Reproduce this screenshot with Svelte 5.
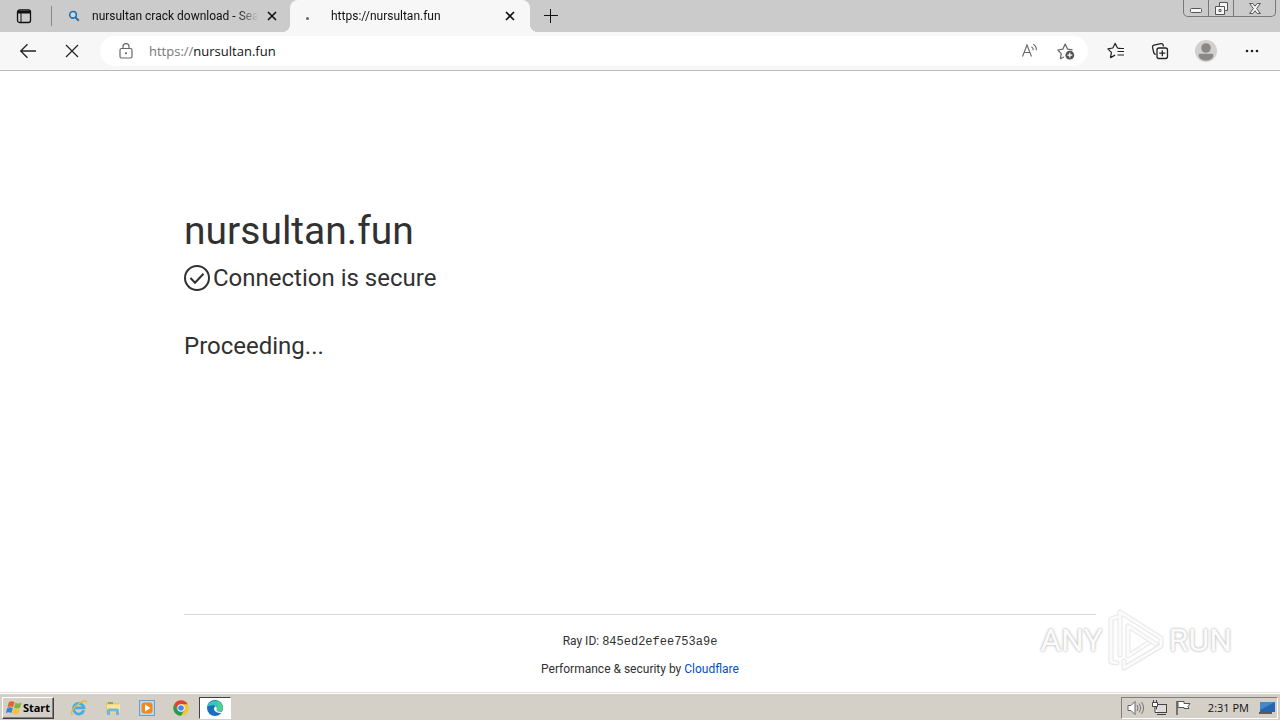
<script>
  const tabs = [
    { title: 'nursultan crack download - Sea', active: false },
    { title: 'https://nursultan.fun', active: true }
  ];
</script>

<div class="desktop">
  <header class="tabstrip">
    <button class="workspace" aria-label="Tab actions">
      <svg width="16" height="16" viewBox="0 0 16 16"><rect x="1.5" y="2" width="13" height="12.5" rx="2" fill="none" stroke="#111" stroke-width="1.3" /><path d="M2 3h12v2.5H2z" fill="#111" /><path d="M5 5v9" stroke="#111" /></svg>
    </button>
    <span class="divider"></span>
    {#each tabs as tab}
      <div class="tab" class:active={tab.active}>
        <span class="favicon">
          {#if tab.active}
            <i class="dot"></i>
          {:else}
            <svg width="12" height="12" viewBox="0 0 12 12"><circle cx="5" cy="4.8" r="3.3" fill="#c2dcef" stroke="#286fa8" stroke-width="1.6" /><path d="M7.4 7.4l3.4 3.4" stroke="#286fa8" stroke-width="2" /></svg>
          {/if}
        </span>
        <span class="title">{tab.title}</span>
        <button class="close" aria-label="Close tab">
          <svg width="10" height="10" viewBox="0 0 10 10"><path d="M1 1l8 8M9 1L1 9" stroke="#111" stroke-width="1.6" /></svg>
        </button>
      </div>
    {/each}
    <button class="newtab" aria-label="New tab">
      <svg width="14" height="14" viewBox="0 0 14 14"><path d="M0 6.500h14M6.500 0v14" stroke="#111" stroke-width="1" /></svg>
    </button>
    <div class="window-controls">
      <button aria-label="Minimize"><svg width="12" height="5" viewBox="0 0 12 5"><rect x=".5" y=".5" width="11" height="4" rx="1" fill="#f5f5f5" stroke="#555" /></svg></button>
      <button aria-label="Restore"><svg width="13" height="13" viewBox="0 0 13 13"><path d="M4.500.5h8v8h-3v4h-9v-8h4z" fill="#f5f5f5" stroke="#555" /><path d="M4.500 4.500h5v4M4 7.500h2v2H4z" fill="none" stroke="#555" /></svg></button>
      <button class="wide" aria-label="Close"><svg width="12" height="11" viewBox="0 0 12 11"><path d="M.6.5h3.200L6 3.200 8.200.5h3.200L7.700 5.500l3.700 5H8.200L6 7.800l-2.200 2.700H.6l3.700-5z" fill="#f5f5f5" stroke="#555" /></svg></button>
    </div>
  </header>

  <nav class="toolbar">
    <button aria-label="Back"><svg width="18" height="16" viewBox="0 0 18 16"><path d="M17 8H2M8.500 1.200L1.700 8l6.800 6.800" fill="none" stroke="#222" stroke-width="1.3" /></svg></button>
    <button aria-label="Stop loading"><svg width="14" height="14" viewBox="0 0 14 14"><path d="M1 1l12 12M13 1L1 13" stroke="#222" stroke-width="1.2" /></svg></button>
    <div class="address">
      <svg width="14" height="16" viewBox="0 0 14 16"><rect x="1" y="5.500" width="12" height="9.500" rx="1.500" fill="none" stroke="#666" stroke-width="1.200" /><path d="M4 5.500V3.600a3 3 0 0 1 6 0v1.900" fill="none" stroke="#666" stroke-width="1.200" /><circle cx="7" cy="10.300" r="1" fill="#555" /></svg>
      <a class="url" href="https://nursultan.fun"><span>https://</span>nursultan.fun</a>
      <button aria-label="Read aloud"><svg width="18" height="16" viewBox="0 0 18 16"><path d="M1.500 13.500L6 2l4.500 11.500M3 9.500h6M10.500 3.800c1.300.8 1.800 2 1.800 3.500M12.300 1.200c2.200 1.300 3.200 3.400 3 6" fill="none" stroke="#666" stroke-width="1.100" /></svg></button>
      <button aria-label="Add to favorites"><svg width="18" height="18" viewBox="0 0 18 18"><path d="M7 15l-3.600 1.800.8-5.200L.9 8l4.900-.8L8.200 2l2.400 5.200 5 .6" fill="none" stroke="#666" stroke-width="1.200" stroke-linejoin="round" /><circle cx="12.800" cy="13.200" r="4.400" fill="#555" /><path d="M12.800 10.800v4.800M10.400 13.200h4.800" stroke="#fff" stroke-width="1.200" /></svg></button>
    </div>
    <button aria-label="Favorites"><svg width="18" height="18" viewBox="0 0 18 18"><path d="M14.500 6.500l-4-.5-2.400-4.600L5.800 6 .9 6.800l3.500 3.500-.9 5.300 4.600-2.500M10.500 9.500H17M10.500 13H17M11 6.500h6" fill="none" stroke="#222" stroke-width="1.200" stroke-linejoin="round" /></svg></button>
    <button aria-label="Collections"><svg width="18" height="18" viewBox="0 0 18 18"><rect x="6" y="6" width="10.500" height="10.500" rx="2" fill="none" stroke="#222" stroke-width="1.300" /><path d="M11.300 8.200v6M8.300 11.200h6M12.500 4.500l-.3-1.300a2 2 0 0 0-2.300-1.500l-7 1.400A1.900 1.900 0 0 0 1.500 5.200l1.300 5.600c.3 1 .9 1.500 2 1.500" fill="none" stroke="#222" stroke-width="1.300" /></svg></button>
    <button class="profile" aria-label="Profile"><svg width="22" height="22" viewBox="0 0 22 22"><circle cx="11" cy="11" r="11" fill="#d2d0ce" /><circle cx="11" cy="8" r="4.800" fill="#8a8886" /><path d="M3.600 15.200c0-1 .8-1.500 1.700-1.500h11.400c.9 0 1.700.5 1.700 1.500 0 3-3.500 5.400-7.400 5.400s-7.400-2.400-7.400-5.400z" fill="#8a8886" /></svg></button>
    <button aria-label="Settings and more"><svg width="14" height="4" viewBox="0 0 14 4"><circle cx="2" cy="2" r="1.300" fill="#222" /><circle cx="7" cy="2" r="1.300" fill="#222" /><circle cx="12" cy="2" r="1.300" fill="#222" /></svg></button>
  </nav>

  <div class="page">
    <main>
      <h1>nursultan.fun</h1>
      <p class="status">
        <svg width="26" height="26" viewBox="0 0 26 26"><circle cx="13" cy="13" r="12" fill="none" stroke="#313131" stroke-width="2" /><path d="M6.500 13l4.500 4.800 8.500-9" fill="none" stroke="#313131" stroke-width="2" /></svg>
        Connection is secure
      </p>
      <p class="proceeding">Proceeding...</p>
    </main>
    <footer>
      <div>Ray ID: <code>845ed2efee753a9e</code></div>
      <div>Performance &amp; security by <a href="https://www.cloudflare.com">Cloudflare</a></div>
    </footer>
    <div class="watermark">
      <span>ANY</span>
      <svg width="58" height="64" viewBox="0 0 58 64"><g fill="none" stroke-linejoin="round" stroke-linecap="round"><path d="M10 9L4 11v43l6 1M13 47V4l41 26v8L17 60v-7M21 18l28 18M21 18v30l20-13" stroke="#e6e6e6" stroke-width="5" /><path d="M10 9L4 11v43l6 1M13 47V4l41 26v8L17 60v-7M21 18l28 18M21 18v30l20-13" stroke="#fbfbfb" stroke-width="3" /></g></svg>
      <span>RUN</span>
    </div>
  </div>

  <div class="taskbar">
    <button class="start">
      <svg width="17" height="16" viewBox="0 0 18 16"><path d="M3 2c2-1.500 4-1.300 6 0L7.500 7.200c-2-1.200-4-1.200-6 0z" fill="#e8622c" /><path d="M10 2.500c2 1 4 1 6.500-.3L15 7.500c-2 1.200-4.500 1.200-6.500.2z" fill="#7bb83a" /><path d="M1.200 8.200c2-1.200 4-1.200 6 0L5.800 13.400c-2-1.200-4-1.200-6 0z" fill="#3c83cf" /><path d="M8.200 8.700c2 1 4.300 1 6.500-.2l-1.500 5.300c-2 1.200-4.300 1.200-6.400.1z" fill="#f6c12d" /></svg>
      Start
    </button>
    <button class="app" aria-label="Internet Explorer"><svg width="18" height="18" viewBox="0 0 18 18"><path d="M13.800 11.300A5.300 5.300 0 1 1 14 8.900H5" fill="none" stroke="#48ade2" stroke-width="2.800" /><path d="M2.500 15.800C-.5 14 3.500 8.500 8 5.200s8.700-4.700 8.400-1.500" fill="none" stroke="#e9b83c" stroke-width="1.400" /></svg></button>
    <button class="app" aria-label="Windows Explorer"><svg width="18" height="18" viewBox="0 0 18 18"><path d="M2 3h5l1 1h7v10H2z" fill="#e8c85d" /><path d="M3 5.500h13v8H3z" fill="#f8e6a0" /><path d="M3 16v-4.500a2 2 0 0 1 2-2h8a2 2 0 0 1 2 2V16h-3v-3.500H6V16z" fill="#73b6dd" /><path d="M4 4h5" stroke="#5aa56a" stroke-width="1.500" /></svg></button>
    <button class="app" aria-label="Media Player"><svg width="18" height="18" viewBox="0 0 18 18"><rect x="1.500" y="1.500" width="15" height="15" fill="#b8d7f0" stroke="#6c9fce" /><rect x="3.500" y="3.500" width="11" height="11" rx="3" fill="#f08a1c" /><path d="M7 5.500L12.500 9 7 12.500z" fill="#fff" /></svg></button>
    <button class="app" aria-label="Chrome"><svg width="16" height="16" viewBox="0 0 16 16"><circle cx="8" cy="8" r="7.700" fill="#f5c62d" /><path d="M1.300 4.200A7.700 7.700 0 0 1 14.700 4.200H8L4.700 9.900z" fill="#dc4437" /><path d="M1.300 4.200A7.700 7.700 0 0 0 8 15.700l3.300-5.900-6.600.1z" fill="#279a54" /><circle cx="8" cy="8" r="3.700" fill="#fff" /><circle cx="8" cy="8" r="2.800" fill="#4285f4" /></svg></button>
    <button class="app pressed" aria-label="Edge"><svg width="18" height="18" viewBox="0 0 18 18"><circle cx="9" cy="9" r="8" fill="#176fbe" /><path d="M1.200 8A8 8 0 0 1 17 9c0 3-2.500 4-5 3.500-1.500-.3-1.800-1-1.200-1.800C12 8.500 9.500 6 6.500 6.200 4 6.300 2 7 1.200 8z" fill="#39c5bd" /><path d="M10.500 1.200A8 8 0 0 1 17 9c0 3-2.500 4-5 3.500-1.500-.3-1.800-1-1.200-1.800 1.800-3 1-6-.3-9.500z" fill="#5bd675" opacity=".65" /><path d="M9.500 7.200c-3 2-1.500 7 5.800 6.700l1.700-1.700c-2 1-6.700.8-6.500-1.200.8-1.500.3-2.800-1-3.800z" fill="#fff" /></svg></button>
    <div class="tray">
      <svg width="18" height="16" viewBox="0 0 18 16"><path d="M1 5.500h3l4-4v13l-4-4H1z" fill="#fff" stroke="#666" /><path d="M10 5q2 3 0 6M12.300 3.500q3 4.500 0 9M14.600 2q4 6 0 12" fill="none" stroke="#777" /></svg>
      <svg width="18" height="16" viewBox="0 0 18 16"><rect x="5.500" y="4.500" width="10" height="8" fill="#ddd" stroke="#444" /><path d="M6 14.500h9" stroke="#444" /><path d="M1.500 2.500h5v4h-5zM4 6.500v6h3M2.500 0v2M5.500 0v2" fill="#fff" stroke="#444" /></svg>
      <svg width="18" height="16" viewBox="0 0 18 16"><path d="M2 1v14" stroke="#555" stroke-width="1.500" /><path d="M3 1.500h6v2h6l-2 3 1 2H9v-1H3z" fill="#fff" stroke="#555" /></svg>
      <time>2:31 PM</time>
      <svg width="17" height="14" viewBox="0 0 17 14"><path d="M1 1h15v10H1z" fill="#2367b4" /><path d="M1 1h15L1 9z" fill="#4788ca" /><path d="M0 12h13" stroke="#333" stroke-width="1.500" /></svg>
    </div>
  </div>
</div>

<style>
  :global(body) { margin: 0; }
  .desktop, .desktop * { box-sizing: border-box; }
  .desktop { min-height: 100vh; display: flex; flex-direction: column; background: #fff; font-family: "Open Sans", "Noto Sans", sans-serif; font-size: 12px; color: #111; }
  button { border: 0; background: none; padding: 0; font: inherit; color: inherit; display: flex; align-items: center; justify-content: center; flex: none; }
  svg { display: block; flex: none; }
  a { text-decoration: none; }
  p, h1 { margin: 0; font-weight: 400; }

  .tabstrip { height: 32px; display: flex; background: #cbcbcb; }
  .workspace { width: 48px; }
  .divider { width: 1px; height: 20px; margin: 6px 2px 0 3px; background: #888; }
  .tab { width: 236px; display: flex; align-items: center; padding: 0 8px 0 12px; }
  .tab.active { position: relative; width: 240px; background: #f7f7f7; border-radius: 8px 8px 0 0; padding: 0 10px 0 9px; }
  .tab.active::before, .tab.active::after { content: ""; position: absolute; bottom: 0; width: 8px; height: 8px; }
  .tab.active::before { left: -8px; background: radial-gradient(circle at 0 0, transparent 8px, #f7f7f7 8px); }
  .tab.active::after { right: -8px; background: radial-gradient(circle at 100% 0, transparent 8px, #f7f7f7 8px); }
  .favicon { width: 16px; margin-right: 10px; display: flex; justify-content: center; flex: none; }
  .active .favicon { margin-right: 16px; }
  .dot { width: 3px; height: 3px; margin-top: 5px; border-radius: 50%; background: #666; }
  .title { flex: 1; min-width: 0; overflow: hidden; white-space: nowrap; margin-right: 4px; font-family: Roboto, sans-serif; mask-image: linear-gradient(to left, transparent, #000 20px); }
  .close { width: 20px; height: 20px; }
  .newtab { width: 42px; }
  .window-controls { display: flex; margin: 0 4px 0 auto; height: 17px; border: 1px solid #777; border-top: 0; border-radius: 0 0 5px 5px; }
  .window-controls button { width: 25px; border-right: 1px solid #777; }
  .window-controls button.wide { width: 41px; border-right: 0; }
  .window-controls button:first-child { padding-top: 4px; }

  .toolbar { height: 39px; display: flex; align-items: center; background: #f7f7f7; border-bottom: 1px solid #bbb; padding: 0 6px; }
  .toolbar > button { width: 44px; height: 32px; }
  .address { flex: 1; min-width: 0; height: 30px; margin: 0 6px; padding: 0 4px 0 19px; display: flex; align-items: center; background: #fff; border-radius: 15px; }
  .url { flex: 1; margin-left: 16px; color: #111; font-size: 13px; }
  .url span { color: #777; }
  .address button { width: 36px; height: 28px; }
  .toolbar .profile { width: 48px; }

  .page { position: relative; flex: 1; display: flex; flex-direction: column; color: #313131; }
  main, footer { width: calc(100% - 48px); max-width: 912px; margin: 0 auto; }
  main { flex: 1; padding-top: 132px; font-family: Roboto, sans-serif; }
  h1 { font-size: 39px; line-height: 57px; }
  .status, .proceeding { font-size: 24px; line-height: 36px; }
  .status { display: flex; align-items: center; gap: 3px; }
  .proceeding { margin-top: 32px; }
  footer { border-top: 1px solid #d9d9d9; padding: 17px 0 14px; text-align: center; font-family: Roboto, sans-serif; line-height: 18px; display: grid; gap: 9px; }
  code { font-family: "Liberation Mono", monospace; font-size: 12px; }
  footer a { color: #0051c3; }
  .watermark { position: absolute; right: 48px; bottom: 20px; display: flex; align-items: center; gap: 4px; font-family: Roboto, sans-serif; font-size: 32px; line-height: 60px; color: #fbfbfb; text-shadow: 0 0 3px #bbb, 0 0 2px #ccc; }

  .taskbar { height: 28px; display: flex; align-items: center; background: #d4d0c8; border-top: 1px solid #e4e1da; padding: 2px 2px 0; box-shadow: inset 0 1px #fff; }
  .start { width: 52px; height: 22px; margin-right: 9px; border: 1px solid; border-color: #fff #404040 #404040 #fff; box-shadow: inset -1px -1px #808080; font: bold 11px "Open Sans", sans-serif; color: #000; }
  .app { width: 32px; height: 22px; margin-right: 2px; }
  .pressed { background: #fff; border: 1px solid; border-color: #404040 #fff #fff #404040; }
  .tray { margin-left: auto; height: 22px; display: flex; align-items: center; gap: 6px; padding: 0 1px 0 5px; border: 1px solid; border-color: #808080 #fff #fff #808080; font-size: 11px; }
  time { margin: 0 4px 0 9px; }
</style>
